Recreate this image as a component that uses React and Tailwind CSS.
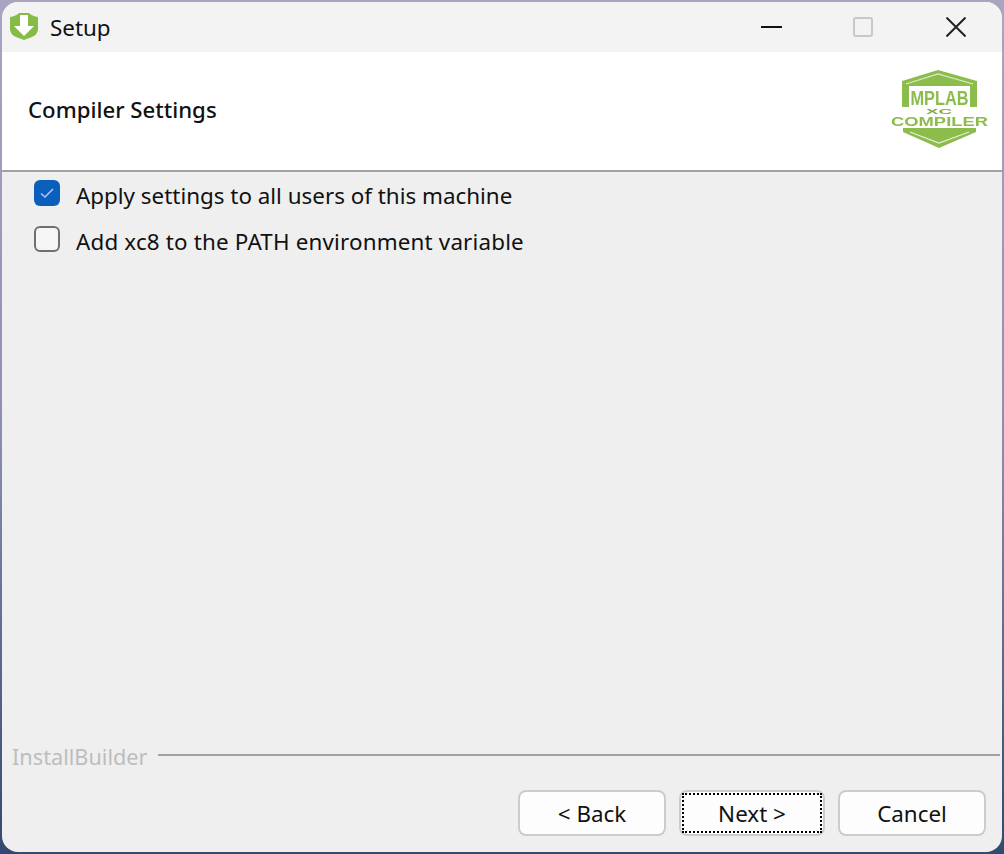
const font = { fontFamily: '"Noto Sans", "Open Sans", sans-serif' };

function AppIcon() {
  return (
    <svg width="28" height="28" viewBox="0 0 28 28" className="shrink-0 blur-[0.5px]">
      <path d="M0 5 Q6 4 9 1 H19 Q22 4 28 5 V17 Q28 22 22 25 L14 28 L6 25 Q0 22 0 17 Z" fill="#86bb45" />
      <path d="M10 3 H18 V14 H24 L14 24 L4 14 H10 Z" fill="#ffffff" />
    </svg>
  );
}

function Logo() {
  return (
    <svg width="104" height="84" viewBox="0 0 104 84" className="shrink-0 blur-[0.4px]">
      <path d="M14 15 L50 4 L89 15 V43 H14 Z" fill="#8cbc4c" />
      <path d="M18 18 L50 8 L85 18" fill="none" stroke="#dcebc8" strokeWidth="1.2" />
      <rect x="21" y="20" width="61" height="21" fill="#ffffff" />
      <text x="51.5" y="39" textAnchor="middle" fontFamily="Liberation Sans, sans-serif" fontWeight="700" fontSize="21" fill="#8cbc4c" textLength="58" lengthAdjust="spacingAndGlyphs">MPLAB</text>
      <rect x="14" y="41" width="75" height="9" fill="#ffffff" />
      <text x="51" y="48" textAnchor="middle" fontFamily="Liberation Sans, sans-serif" fontWeight="700" fontSize="8" fill="#7da843" textLength="26" lengthAdjust="spacingAndGlyphs">XC</text>
      <text x="51.5" y="60" textAnchor="middle" fontFamily="Liberation Sans, sans-serif" fontWeight="700" fontSize="12" fill="#8cbc4c" textLength="97" lengthAdjust="spacingAndGlyphs">COMPILER</text>
      <path d="M15 62 H88 V66 L51 82 L15 66 Z" fill="#8cbc4c" />
      <path d="M22 66 L51 77 L81 66" fill="none" stroke="#e3efd3" strokeWidth="1.3" />
    </svg>
  );
}

function Check({ checked, label, wide }) {
  return (
    <div className="flex items-center h-[46px] pl-[32px]">
      {checked ? (
        <span className="w-[26px] h-[26px] rounded-[6px] bg-[#0a5fbd] flex items-center justify-center shrink-0">
          <svg width="16" height="12" viewBox="0 0 16 12">
            <path d="M2 6.5 L6 10 L14 2" fill="none" stroke="#a9c8ec" strokeWidth="1.6" />
          </svg>
        </span>
      ) : (
        <span className="w-[26px] h-[26px] rounded-[6px] bg-[#f5f5f5] border-2 border-[#6f6f6f] shrink-0" />
      )}
      <span className={`ml-[16px] mt-[5px] text-[22.4px] text-[#111111] whitespace-nowrap ${wide ? "tracking-[0.17px]" : ""}`}>{label}</span>
    </div>
  );
}

function Btn({ children, focus }) {
  return (
    <div className={`relative ${focus ? "w-[146px]" : "w-[148px]"} h-[46px] rounded-[8px] bg-[#fdfdfd] border-2 border-[#cccccc] flex items-center justify-center text-[22.4px] text-[#111111]`}>
      {focus && <span className="absolute inset-[1px] border-2 border-dotted border-black" />}
      <span className="mt-[1px]">{children}</span>
    </div>
  );
}

export default function App() {
  return (
    <div className="w-[1004px] h-[854px] overflow-hidden bg-gradient-to-b from-[#a9a5c0] via-[#8d8fb2] to-[#33496f]" style={font}>
      <div className="ml-[2px] mt-[2px] w-[1000px] h-[850px] rounded-[16px] overflow-hidden flex flex-col bg-[#efefef]">
        <div className="h-[50px] bg-[#f3f3f3] flex items-center shrink-0">
          <div className="ml-[8px] -mt-[2px]"><AppIcon /></div>
          <span className="ml-[12px] mt-[2px] text-[22.4px] text-[#111111]">Setup</span>
          <div className="ml-auto flex items-center">
            <svg width="21" height="4" viewBox="0 0 21 4"><path d="M0 2 H21" stroke="#111111" strokeWidth="2" /></svg>
            <span className="ml-[71px] w-[20px] h-[20px] rounded-[3px] border-2 border-[#c8c8c8]" />
            <svg className="ml-[73px] mr-[36px]" width="20" height="20" viewBox="0 0 20 20"><path d="M0.5 0.5 L19.5 19.5 M19.5 0.5 L0.5 19.5" stroke="#222222" strokeWidth="2" /></svg>
          </div>
        </div>
        <div className="h-[118px] bg-white flex items-start justify-between shrink-0 pl-[26px] pr-[10px]">
          <span className="mt-[41px] text-[22.2px] font-medium text-[#111111]">Compiler Settings</span>
          <div className="mt-[14px]"><Logo /></div>
        </div>
        <div className="h-[2px] bg-[#a2a2a2] shrink-0" />
        <div className="flex-1 -mt-[2px]">
          <Check checked label="Apply settings to all users of this machine" />
          <Check wide label="Add xc8 to the PATH environment variable" />
        </div>
        <div className="flex items-center h-[30px] pl-[10px] pr-[2px] shrink-0 -mt-[2px] mb-[2px]">
          <span className="mt-[3px] text-[21.7px] text-[#bdbdbd]">InstallBuilder</span>
          <div className="ml-[10px] -mt-[3px] flex-1 h-[2px] bg-[#a2a2a2]" />
        </div>
        <div className="flex justify-end gap-[13px] pr-[16px] pt-[17px] pb-[16px] shrink-0">
          <Btn>&lt; Back</Btn>
          <Btn focus>Next &gt;</Btn>
          <Btn>Cancel</Btn>
        </div>
      </div>
    </div>
  );
}
